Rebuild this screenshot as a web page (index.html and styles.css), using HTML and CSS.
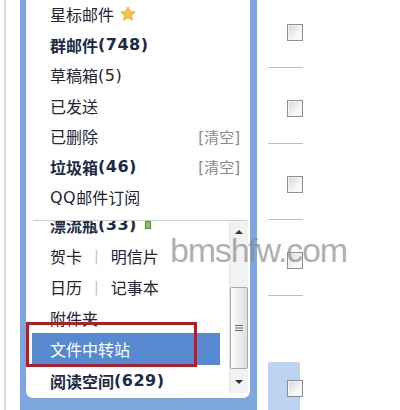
FILE: index.html
```html
<!DOCTYPE html>
<html lang="zh-CN">

<head>
    <meta charset="UTF-8">
    <meta name="viewport" content="width=device-width, initial-scale=1.0">
    <title>文件夹</title>
    <link rel="stylesheet" href="styles.css">
</head>

<body>
    <div class="page">
        <div class="rail"></div>
        <div class="folders">
            <ul class="folder-list">
                <li>
                    <span class="name">星标邮件
                        <svg class="star" viewBox="0 0 16 16" width="16" height="16">
                            <path d="M8 1l2.1 4.4 4.8.6-3.5 3.3.9 4.8L8 11.8 3.7 14.1l.9-4.8L1.1 6l4.8-.6z" fill="#f6c445" stroke="#e0a526" stroke-width=".8" />
                        </svg>
                    </span>
                </li>
                <li class="bold"><span class="name">群邮件<i>(748)</i></span></li>
                <li><span class="name">草稿箱<i>(5)</i></span></li>
                <li><span class="name">已发送</span></li>
                <li><span class="name">已删除</span><span class="clear">[清空]</span></li>
                <li class="bold"><span class="name">垃圾箱<i>(46)</i></span><span class="clear">[清空]</span></li>
                <li><span class="name"><i>QQ</i>邮件订阅</span></li>
            </ul>
            <div class="more-panel">
                <div class="more-scroll">
                    <ul class="more-list">
                        <li class="bold">漂流瓶<i>(33)</i><span class="dot"></span></li>
                        <li>贺卡<span class="sep">|</span>明信片</li>
                        <li>日历<span class="sep">|</span>记事本</li>
                        <li>附件夹</li>
                        <li class="active">文件中转站</li>
                        <li class="bold">阅读空间<i>(629)</i></li>
                    </ul>
                </div>
                <div class="scrollbar">
                    <div class="sb-btn"><span class="arrow-up"></span></div>
                    <div class="sb-gap"></div>
                    <div class="sb-thumb">
                        <svg viewBox="0 0 8 8" width="8" height="8">
                            <path d="M0 1.5h8M0 4h8M0 6.5h8" stroke="#6b6b6b" stroke-width="1" />
                        </svg>
                    </div>
                    <div class="sb-fill"></div>
                    <div class="sb-btn"><span class="arrow-down"></span></div>
                </div>
                <div class="mark-box"></div>
            </div>
        </div>
        <div class="mail-col">
            <div class="mail-row"><span class="check"></span></div>
            <div class="mail-row"><span class="check"></span></div>
            <div class="mail-row"><span class="check"></span></div>
            <div class="mail-row"><span class="check"></span></div>
            <div class="mail-space"></div>
            <div class="mail-row selected"><span class="check"></span></div>
        </div>
    </div>
    <div class="watermark">bmshfw.com</div>
</body>

</html>
```

FILE: styles.css
```css
* {
    margin: 0;
    padding: 0;
    box-sizing: border-box;
}

body {
    width: 400px;
    height: 410px;
    overflow: hidden;
    background: #fff;
    font-family: "DejaVu Sans", "Noto Sans CJK SC", sans-serif;
    font-size: 16px;
    color: #222433;
}

ul {
    list-style: none;
}

i {
    font-style: normal;
    letter-spacing: 0.5px;
}

.page {
    display: flex;
    height: 410px;
}

.rail {
    width: 2px;
    margin-left: 4px;
    background: #d3dde9;
}

/* folder tree */
.folders {
    width: 237px;
    margin-left: 14px;
    display: flex;
    flex-direction: column;
    background: #7ea6de;
    border-left: 6px solid #7ea6de;
    border-right: 7px solid #7ea6de;
}

.folder-list {
    height: 220px;
    background: #fff;
}

.folder-list li {
    display: flex;
    justify-content: space-between;
    align-items: center;
    height: 30.5px;
    padding: 0 10px 0 24px;
}

.folder-list li:first-child {
    margin-top: -1px;
}

.name {
    display: flex;
    align-items: center;
}

.star {
    margin-left: 6px;
}

.bold {
    font-weight: bold;
    color: #1d2a47;
}

.clear {
    color: #8a8a8a;
    font-size: 15px;
    font-weight: normal;
}

.more-panel {
    position: relative;
    display: flex;
    height: 178px;
    background: #fff;
    border-radius: 0 0 7px 7px;
    overflow: hidden;
}

.more-panel::before {
    content: "";
    position: absolute;
    top: 0;
    left: 7px;
    right: 3px;
    height: 1px;
    background: #cfcfcf;
}

.more-scroll {
    flex: 1;
    overflow: hidden;
}

.more-list {
    margin-top: -11px;
}

.more-list li {
    display: flex;
    align-items: center;
    height: 31px;
    padding-left: 24px;
}

.more-list .sep {
    margin: 0 12px;
    color: #c2c2c2;
    font-size: 14px;
    font-weight: normal;
}

.more-list .dot {
    width: 6px;
    height: 8px;
    margin-left: 8px;
    background: #80c65e;
    border: 1px solid #4f9334;
}

.more-list .active {
    height: 32px;
    margin: 0 9px 0 6px;
    padding-left: 18px;
    background: #5689d0;
    color: #fff;
}

.scrollbar {
    width: 19px;
    height: 173px;
    margin-right: 2px;
    display: flex;
    flex-direction: column;
    background: #f2f2f2;
    border-left: 1px solid #e6e6e6;
}

.sb-btn {
    height: 24px;
    display: flex;
    align-items: center;
    justify-content: center;
}

.sb-btn:last-child {
    height: 23px;
}

.arrow-up,
.arrow-down {
    width: 0;
    height: 0;
    border-left: 4px solid transparent;
    border-right: 4px solid transparent;
}

.arrow-up {
    border-bottom: 4px solid #333;
}

.arrow-down {
    border-top: 4px solid #333;
}

.sb-gap {
    height: 43px;
}

.sb-thumb {
    height: 82px;
    display: flex;
    align-items: center;
    justify-content: center;
    background: linear-gradient(to right, #fefefe, #dedede);
    border: 1px solid #a7a7a7;
    border-radius: 2px;
}

.sb-fill {
    flex: 1;
}

/* red box drawn round the selected entry */
.mark-box {
    position: absolute;
    left: 0;
    top: 102px;
    width: 171px;
    height: 45px;
    border: 3px solid #c5161f;
}

/* mail list, left edge */
.mail-col {
    width: 35px;
    margin-left: 11px;
    margin-top: -8px;
    display: flex;
    flex-direction: column;
    overflow: hidden;
}

.mail-row {
    height: 76px;
    padding: 32px 0 0 19px;
    border-bottom: 1px solid #bdbdbd;
}

.mail-space {
    height: 66px;
}

.mail-row.selected {
    flex: 1;
    width: 32px;
    padding-top: 18px;
    background: #bcd3f1;
    border-bottom: none;
}

.check {
    display: block;
    width: 16px;
    height: 17px;
    border: 1px solid #8e8e8e;
    background: linear-gradient(135deg, #d6d6d6, #fbfbfb 75%);
    box-shadow: inset 0 0 0 1px #f4f4f4;
}

.watermark {
    position: absolute;
    left: 170px;
    top: 234px;
    font-family: "Liberation Sans", sans-serif;
    font-size: 34px;
    line-height: 33px;
    letter-spacing: -1.2px;
    color: rgba(140, 140, 140, 0.7);
}
```
